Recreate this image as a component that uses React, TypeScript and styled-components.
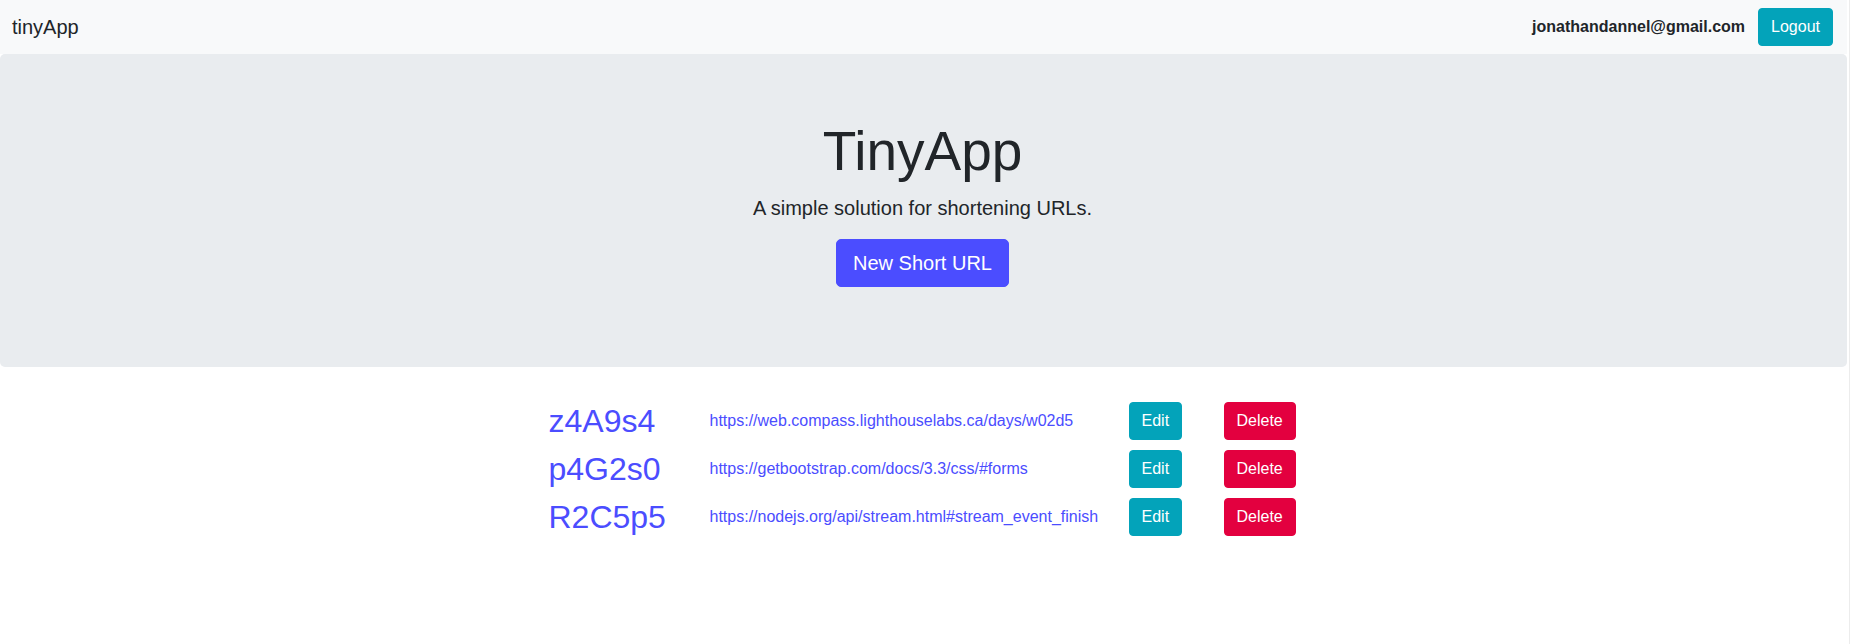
import React from "react";
import styled, { createGlobalStyle } from "styled-components";

const GlobalStyle = createGlobalStyle`
  html, body {
    margin: 0;
    padding: 0;
    background: #ffffff;
  }
  body {
    font-family: "Liberation Sans", Arial, sans-serif;
    font-size: 16px;
    line-height: 1.5;
    color: #212529;
  }
  * { box-sizing: border-box; }
`;

const Page = styled.div`
  width: 100%;
  min-height: 644px;
  background: #ffffff;
  padding-right: 2px;
  border-right: 1px solid #ececec;
`;

const NavBar = styled.nav`
  display: flex;
  align-items: center;
  justify-content: space-between;
  height: 54px;
  padding: 0 14px 0 12px;
  background: #f8f9fa;
`;

const Brand = styled.a`
  font-size: 20px;
  line-height: 30px;
  padding: 5px 0;
  color: #212529;
  text-decoration: none;
`;

const NavRight = styled.div`
  display: flex;
  align-items: center;
  gap: 13px;
`;

const Email = styled.span`
  font-weight: 700;
  font-size: 16px;
  line-height: 24px;
  color: #212529;
`;

const Button = styled.button<{ $bg: string; $lg?: boolean }>`
  display: inline-block;
  font-family: "Liberation Sans", Arial, sans-serif;
  font-size: ${(p) => (p.$lg ? "20px" : "16px")};
  line-height: ${(p) => (p.$lg ? "30px" : "24px")};
  padding: ${(p) => (p.$lg ? "8px 16px" : "6px 12px")};
  border: 1px solid ${(p) => p.$bg};
  border-radius: ${(p) => (p.$lg ? "5px" : "4px")};
  background: ${(p) => p.$bg};
  color: #ffffff;
  cursor: pointer;
`;

const Jumbotron = styled.header`
  background: #e9ecef;
  border-radius: 5px;
  padding: 64px 34px 64px 32px;
  margin-bottom: 30px;
  text-align: center;
`;

const Title = styled.h1`
  margin: 0 0 8px;
  font-size: 55px;
  font-weight: 400;
  line-height: 67px;
  color: #212529;
`;

const Lead = styled.p`
  margin: 0 0 16px;
  font-size: 20px;
  line-height: 30px;
  font-weight: 400;
`;

const ActionRow = styled.p`
  margin: 0 0 16px;
`;

const UrlList = styled.div`
  display: grid;
  grid-template-columns: 161px 419px 95px 72px;
  grid-auto-rows: 48px;
  align-items: center;
  justify-content: center;
  padding-right: 3px;
`;

const Code = styled.a`
  font-size: 32px;
  line-height: 38px;
  color: #4b4dff;
  text-decoration: none;
`;

const LongUrl = styled.a`
  font-size: 16px;
  line-height: 24px;
  color: #4b4dff;
  text-decoration: none;
`;

const Cell = styled.div`
  display: flex;
  align-items: center;
`;

const urls = [
  { code: "z4A9s4", url: "https://web.compass.lighthouselabs.ca/days/w02d5" },
  { code: "p4G2s0", url: "https://getbootstrap.com/docs/3.3/css/#forms" },
  { code: "R2C5p5", url: "https://nodejs.org/api/stream.html#stream_event_finish" },
];

export default function App() {
  return (
    <Page>
      <GlobalStyle />
      <NavBar>
        <Brand href="#">tinyApp</Brand>
        <NavRight>
          <Email>jonathandannel@gmail.com</Email>
          <Button $bg="#03a3ba">Logout</Button>
        </NavRight>
      </NavBar>
      <Jumbotron>
        <Title>TinyApp</Title>
        <Lead>A simple solution for shortening URLs.</Lead>
        <ActionRow>
          <Button $bg="#4b4dff" $lg>
            New Short URL
          </Button>
        </ActionRow>
      </Jumbotron>
      <UrlList>
        {urls.map((u) => (
          <React.Fragment key={u.code}>
            <Cell>
              <Code href="#">{u.code}</Code>
            </Cell>
            <Cell>
              <LongUrl href="#">{u.url}</LongUrl>
            </Cell>
            <Cell>
              <Button $bg="#03a3ba">Edit</Button>
            </Cell>
            <Cell>
              <Button $bg="#e3003f">Delete</Button>
            </Cell>
          </React.Fragment>
        ))}
      </UrlList>
    </Page>
  );
}
